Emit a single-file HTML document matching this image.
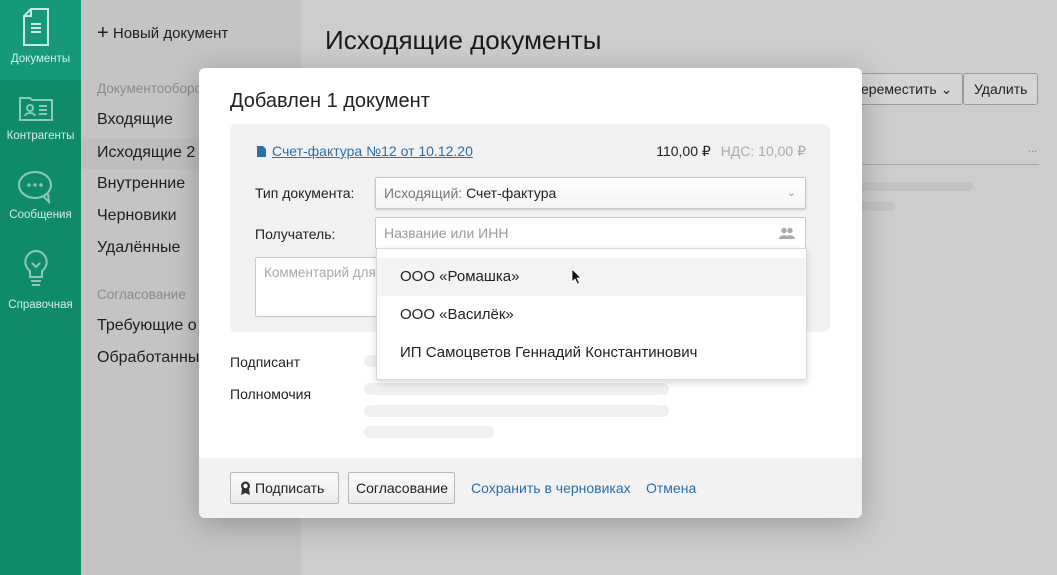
<!DOCTYPE html>
<html><head><meta charset="utf-8"><style>
*{box-sizing:border-box;margin:0;padding:0}
body{width:1057px;height:575px;overflow:hidden;font-family:"Liberation Sans",sans-serif;background:#cbcbcb;position:relative;color:#222}
.side{position:absolute;left:0;top:0;width:81px;height:575px;background:#0f8a6b}
.side .act{position:absolute;left:0;top:0;width:81px;height:80px;background:#16997a}
.si{position:absolute;left:0;width:81px;text-align:center;color:#d6efe7;font-size:11.5px}
.nav{position:absolute;left:81px;top:0;width:220px;height:575px;background:#c4c4c4}
.nav div{position:absolute;left:16px;font-size:16px;color:#1e1e1e}
.nav .g{font-size:13.5px;color:#8a8a8a}
.main{position:absolute;left:301px;top:0;right:0;height:575px;background:#cdcdcd}
h1{position:absolute;left:325px;top:25px;font-size:26px;font-weight:normal;color:#1a1a1a}
.btn{position:absolute;border:1px solid #9a9a9a;border-radius:3px;background:#d4d4d4;font-size:14px;padding:0 10px;line-height:30px;color:#222}
.modal{position:absolute;left:199px;top:68px;width:663px;height:450px;background:#fff;border-radius:6px;box-shadow:0 6px 30px rgba(0,0,0,.25);overflow:hidden}
.modal h2{position:absolute;left:31px;top:22px;font-size:20px;font-weight:normal;color:#222}
.card{position:absolute;left:31px;top:56px;width:600px;height:208px;background:#f1f1f1;border-radius:6px}
.lbl{position:absolute;font-size:14px;color:#222}
.inp{position:absolute;background:#fff;border:1px solid #c8c8c8;border-radius:2px;font-size:14px}
.sk{position:absolute;background:#efefef;border-radius:6px;height:12px}
.foot{position:absolute;left:0;top:390px;width:663px;height:60px;background:#f2f2f2}
.fb{position:absolute;top:14px;height:32px;line-height:30px;border:1px solid #b8b8b8;border-radius:2px;background:linear-gradient(#fafafa,#ececec);font-size:14px;padding:0 9px;color:#222}
.lnk{position:absolute;top:22px;font-size:14px;color:#2a6fa8}
.dd{position:absolute;left:376px;top:248px;width:431px;height:132px;background:#fff;border:1px solid #d8d8d8;border-radius:2px;box-shadow:0 3px 8px rgba(0,0,0,.15)}
.dd div{position:absolute;left:0;width:429px;height:38px;line-height:38px;padding-left:23px;font-size:15px;color:#222}
</style></head><body>
<div class="side"><div class="act"></div>
<svg style="position:absolute;left:22px;top:8px" width="28" height="38" viewBox="0 0 28 38" fill="none" stroke="#c9ebe0" stroke-width="2"><path d="M9 1H26V37H2V8Z M9 1V8H2"/><path d="M9 16h10M9 20h10M9 24h10"/></svg>
<div class="si" style="top:53px">Документы</div>
<svg style="position:absolute;left:19px;top:95px" width="34" height="26" viewBox="0 0 34 26" fill="none" stroke="#8cc9b6" stroke-width="2"><path d="M1 3h10l2 2h20v20H1Z"/><circle cx="11" cy="13" r="3"/><path d="M6 21c1-4 9-4 10 0M20 11h8M20 15h8M20 19h8"/></svg>
<div class="si" style="top:130px">Контрагенты</div>
<svg style="position:absolute;left:17px;top:170px" width="36" height="34" viewBox="0 0 36 34" fill="none" stroke="#8cc9b6" stroke-width="2"><ellipse cx="18" cy="15" rx="16" ry="13"/><path d="M26 26l6 6-1-8"/><circle cx="12" cy="15" r=".8"/><circle cx="18" cy="15" r=".8"/><circle cx="24" cy="15" r=".8"/></svg>
<div class="si" style="top:209px">Сообщения</div>
<svg style="position:absolute;left:24px;top:250px" width="24" height="38" viewBox="0 0 24 38" fill="none" stroke="#8cc9b6" stroke-width="2"><path d="M12 1a11 11 0 0 0-6 20v6h12v-6A11 11 0 0 0 12 1Z"/><path d="M8 13l4 4 4-4M7 31h10M8 35h8"/></svg>
<div class="si" style="top:299px">Справочная</div>
</div>
<div class="nav">
<div style="top:21px;font-size:15px"><b style="font-size:20px;font-weight:normal;position:relative;top:1px">+</b> Новый документ</div>
<div class="g" style="top:81px">Документооборот</div>
<div style="top:111px">Входящие</div>
<div style="left:0;width:220px;padding-left:16px;background:#bebebe;height:30px;line-height:20px;top:139px;padding-top:4px">Исходящие 2</div>
<div style="top:175px">Внутренние</div>
<div style="top:207px">Черновики</div>
<div style="top:239px">Удалённые</div>
<div class="g" style="top:287px">Согласование</div>
<div style="top:317px">Требующие о</div>
<div style="top:349px">Обработанны</div>
</div>
<div class="main"></div>
<h1>Исходящие документы</h1>
<div class="btn" style="left:850px;top:73px;height:32px;padding-left:10px">ереместить ⌄</div>
<div class="btn" style="left:963px;top:73px;height:32px">Удалить</div>
<div style="position:absolute;left:860px;top:164px;width:179px;height:1px;background:#a8a8a8"></div>
<div style="position:absolute;left:1028px;top:143px;color:#888;font-size:11px">...</div>
<div style="position:absolute;left:860px;top:182px;width:113px;height:9px;background:#c3c3c3;border-radius:5px"></div>
<div style="position:absolute;left:860px;top:202px;width:35px;height:9px;background:#c3c3c3;border-radius:5px"></div>
<div class="modal">
<h2>Добавлен 1 документ</h2>
<div class="card">
<svg style="position:absolute;left:27px;top:22px" width="9" height="11" viewBox="0 0 9 11"><path d="M0 0h6l3 3v8H0Z" fill="#2a6fa8"/></svg>
<div style="position:absolute;left:42px;top:19px;font-size:14px;color:#2a6fa8;text-decoration:underline">Счет-фактура №12 от 10.12.20</div>
<div style="position:absolute;right:24px;top:19px;font-size:14px">110,00 ₽ <span style="color:#aaa;margin-left:6px">НДС: 10,00 ₽</span></div>
<div class="lbl" style="left:25px;top:61px">Тип документа:</div>
<div class="inp" style="left:145px;top:53px;width:431px;height:32px;line-height:30px;padding-left:8px;background:linear-gradient(#fff,#f4f4f4);box-shadow:0 1px 2px rgba(0,0,0,.15)"><span style="color:#777">Исходящий:</span> Счет-фактура<span style="position:absolute;right:9px;color:#999;font-size:11px">⌄</span></div>
<div class="lbl" style="left:25px;top:102px">Получатель:</div>
<div class="inp" style="left:145px;top:93px;width:431px;height:32px;line-height:30px;padding-left:8px;color:#999">Название или ИНН
<svg style="position:absolute;right:10px;top:9px" width="16" height="12" viewBox="0 0 16 12" fill="#aaa"><circle cx="5" cy="3.5" r="2.7"/><circle cx="11" cy="3.5" r="2.7"/><path d="M0 12c0-5 10-5 10 0ZM6 12c0-5 10-5 10 0Z"/></svg></div>
<div class="inp" style="left:25px;top:133px;width:200px;height:60px;padding:7px 8px;color:#aaa;font-size:13.5px">Комментарий для</div>
</div>
<div class="lbl" style="left:31px;top:286px">Подписант</div>
<div class="lbl" style="left:31px;top:318px">Полномочия</div>
<div class="sk" style="left:165px;top:287px;width:120px"></div>
<div class="sk" style="left:165px;top:315px;width:305px"></div>
<div class="sk" style="left:165px;top:337px;width:305px"></div>
<div class="sk" style="left:165px;top:358px;width:130px"></div>
<div class="foot">
<div class="fb" style="left:31px;width:109px"><svg width="11" height="14" viewBox="0 0 11 14" style="vertical-align:-2px;margin-right:4px"><circle cx="5.5" cy="5" r="4.5" fill="#333"/><circle cx="5.5" cy="5" r="2.2" fill="#fff"/><path d="M2 8l-1 6 4.5-2 4.5 2-1-6" fill="#333"/></svg>Подписать</div>
<div class="fb" style="left:149px;width:107px;padding:0 7px">Согласование</div>
<div class="lnk" style="left:272px">Сохранить в черновиках</div>
<div class="lnk" style="left:447px">Отмена</div>
</div>
</div>
<div class="dd">
<div style="top:9px;background:#f3f3f3">ООО «Ромашка»</div>
<div style="top:47px">ООО «Василёк»</div>
<div style="top:85px">ИП Самоцветов Геннадий Константинович</div>
</div>
<svg style="position:absolute;left:571px;top:268px" width="11" height="17" viewBox="0 0 11 17"><path d="M1 1v13l3-3 2.5 5 2-1-2.5-5h4Z" fill="#111" stroke="#fff" stroke-width=".8"/></svg>
</body></html>
